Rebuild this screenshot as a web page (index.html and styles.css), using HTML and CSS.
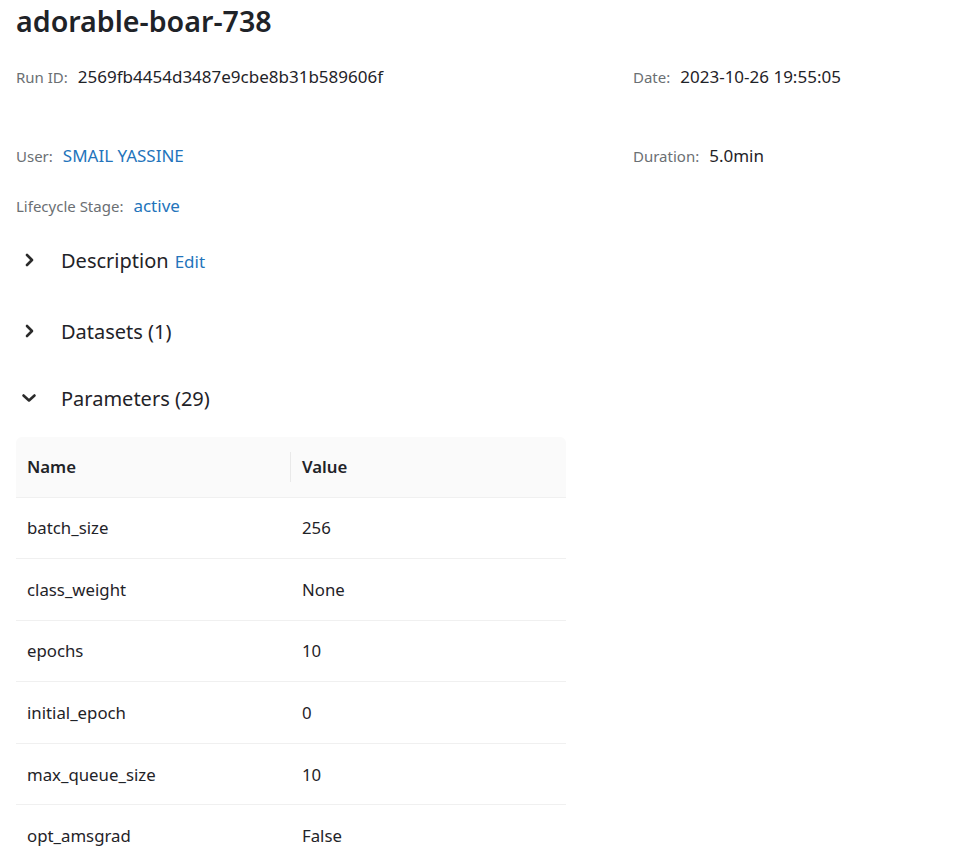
FILE: index.html
```html
<!DOCTYPE html>
<html>
<head>
<meta charset="utf-8">
<link rel="stylesheet" href="styles.css">
</head>
<body>
<div class="page">
  <h1 class="title">adorable-boar-738</h1>
  <div class="meta">
    <div class="meta-item"><span class="label">Run ID:</span><span class="value">2569fb4454d3487e9cbe8b31b589606f</span></div>
    <div class="meta-item"><span class="label">Date:</span><span class="value">2023-10-26 19:55:05</span></div>
    <div class="meta-item"><span class="label">User:</span><span class="value link">SMAIL YASSINE</span></div>
    <div class="meta-item"><span class="label">Duration:</span><span class="value">5.0min</span></div>
    <div class="meta-item"><span class="label">Lifecycle Stage:</span><span class="value link">active</span></div>
  </div>
  <div class="section s-desc">
    <svg class="chev" width="16" height="16" viewBox="0 0 16 16"><path d="M6 3 L11 8 L6 13" fill="none" stroke="#2b2b2b" stroke-width="2.6" stroke-linecap="round" stroke-linejoin="round"/></svg>
    <span class="sec-title">Description</span><span class="edit">Edit</span>
  </div>
  <div class="section s-data">
    <svg class="chev" width="16" height="16" viewBox="0 0 16 16"><path d="M6 3 L11 8 L6 13" fill="none" stroke="#2b2b2b" stroke-width="2.6" stroke-linecap="round" stroke-linejoin="round"/></svg>
    <span class="sec-title">Datasets (1)</span>
  </div>
  <div class="section s-param">
    <svg class="chev" width="16" height="16" viewBox="0 0 16 16"><path d="M2.5 5.5 L8 10.5 L13.5 5.5" fill="none" stroke="#2b2b2b" stroke-width="2.6" stroke-linecap="round" stroke-linejoin="round"/></svg>
    <span class="sec-title">Parameters (29)</span>
  </div>
  <table class="params">
    <thead><tr><th class="c-name">Name</th><th class="c-val">Value</th></tr></thead>
    <tbody>
      <tr><td>batch_size</td><td>256</td></tr>
      <tr><td>class_weight</td><td>None</td></tr>
      <tr><td>epochs</td><td>10</td></tr>
      <tr><td>initial_epoch</td><td>0</td></tr>
      <tr><td>max_queue_size</td><td>10</td></tr>
      <tr><td>opt_amsgrad</td><td>False</td></tr>
    </tbody>
  </table>
</div>
</body>
</html>
```
FILE: styles.css
```css
* { box-sizing: border-box; }
html, body { margin: 0; padding: 0; background: #fff; }
body { font-family: "Noto Sans", "Open Sans", sans-serif; color: #333; overflow: hidden; }
.page { padding: 0 16px; }
.title { margin: 0; padding-top: 2px; font-size: 28.6px; font-weight: 600; line-height: 38px; color: #1f2328; }
.meta { display: grid; grid-template-columns: 617px 1fr; grid-template-rows: 28px 51px 28px 22px 28px; margin-top: 23px; }
.meta-item { font-size: 17px; line-height: 28px; white-space: nowrap; }
.meta-item:nth-child(1), .meta-item:nth-child(2) { grid-row: 1; }
.meta-item:nth-child(3), .meta-item:nth-child(4) { grid-row: 3; }
.meta-item:nth-child(5) { grid-row: 5; }
.label { color: #6b6f73; font-size: 15px; margin-right: 10px; }
.value { color: #1f2328; }
.link { color: #2374bb; }
.section { display: flex; align-items: center; height: 40px; }
.chev { margin-left: 5px; margin-right: 24px; flex: none; }
.sec-title { font-size: 20px; color: #1f2328; }
.edit { font-size: 17px; color: #2374bb; margin-left: 6px; margin-top: 3px; }
.s-desc { margin-top: 20px; }
.s-data { margin-top: 31px; }
.s-param { margin-top: 27px; }
.params { margin-top: 19px; width: 550px; border-collapse: collapse; font-size: 16.8px; }
.params thead th { background: #fafafa; height: 60px; text-align: left; font-weight: 600; color: #1f2328; padding: 0 11px; border-bottom: 1px solid #f0f0f0; position: relative; }
.params thead th.c-name { width: 275px; border-top-left-radius: 6px; }
.params thead th.c-val { border-top-right-radius: 6px; }
.params thead th.c-name::after { content: ""; position: absolute; right: 0; top: 15px; height: 30px; width: 1px; background: #e9e9e9; }
.params td { height: 61.6px; padding: 0 11px; border-bottom: 1px solid #f0f0f0; color: #1f2328; }
```
